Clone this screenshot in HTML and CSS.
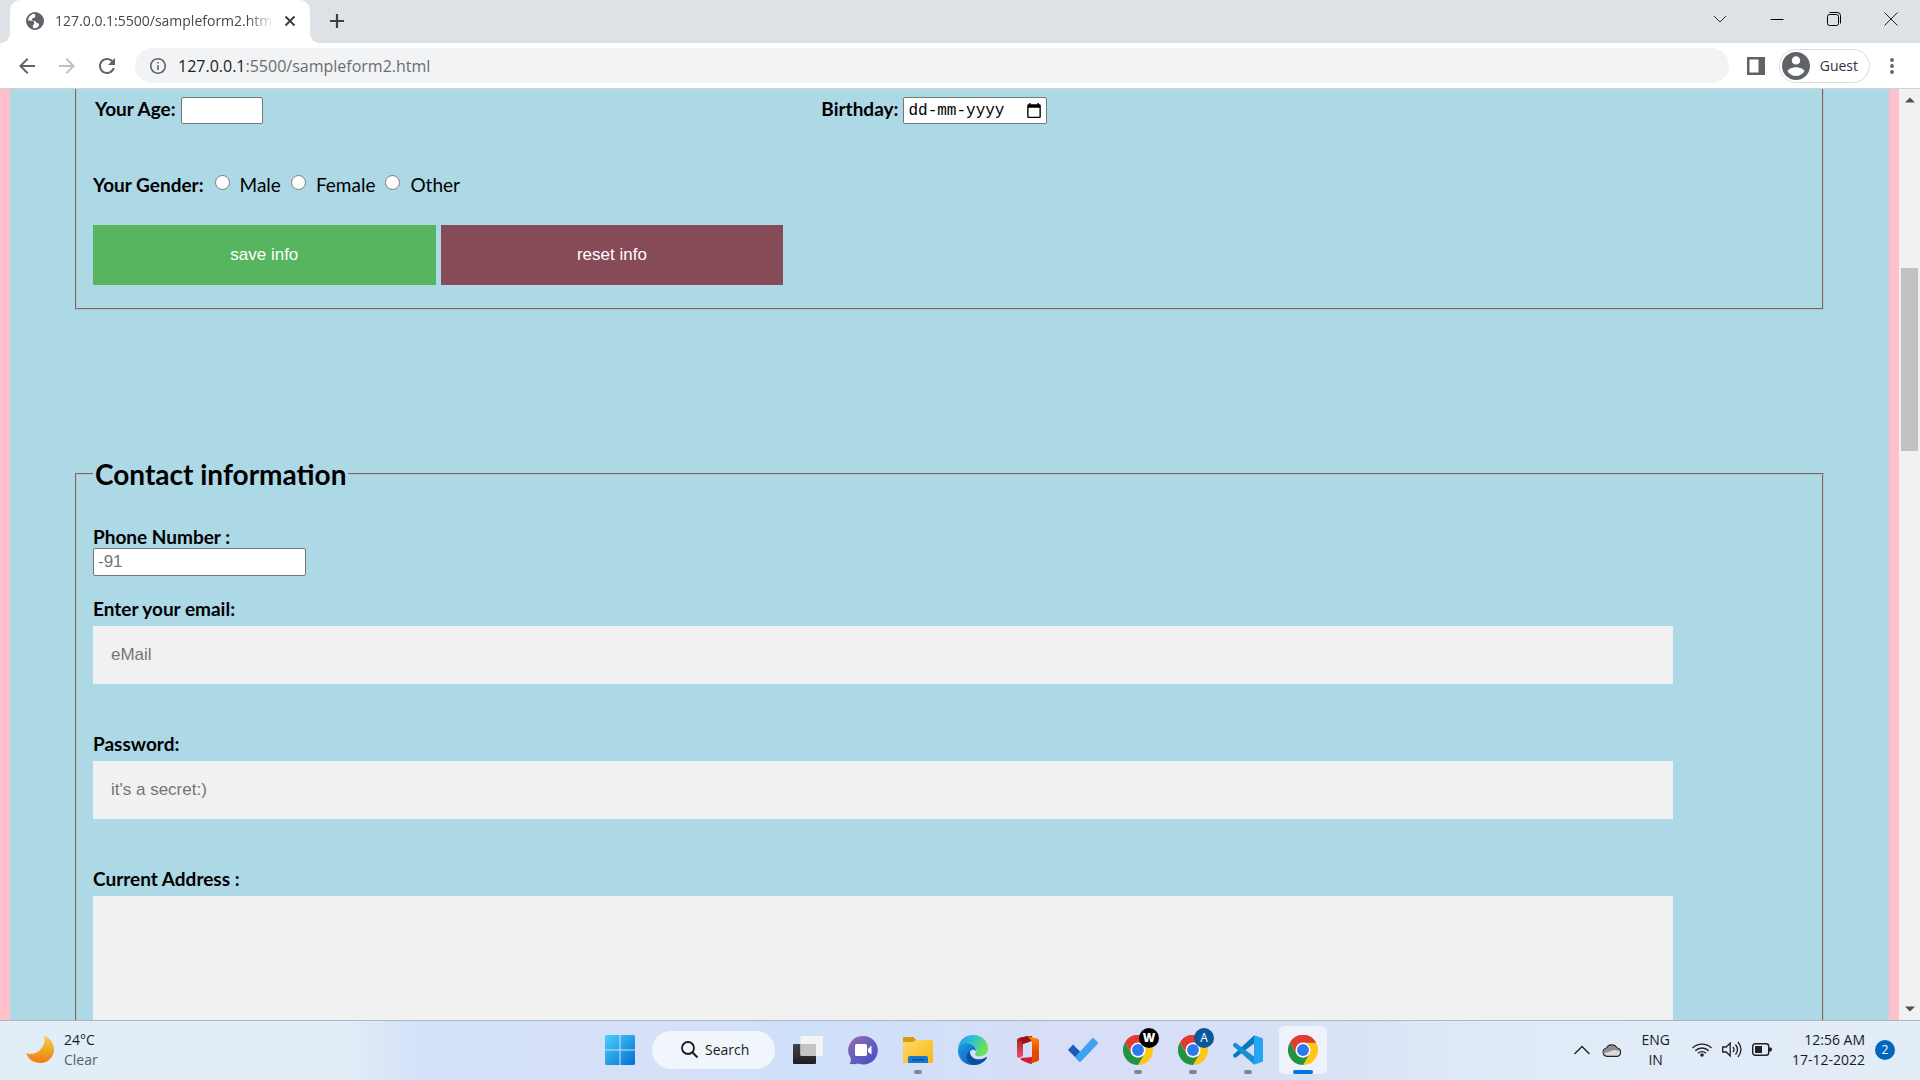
FILE: index.html
```html
<!DOCTYPE html>
<html lang="en">
<head>
<meta charset="utf-8">
<title>127.0.0.1:5500/sampleform2.html</title>
<link rel="stylesheet" href="styles.css">
</head>
<body>
<svg class="defs" aria-hidden="true">
  <defs>
    <symbol id="chrome" viewBox="0 0 48 48">
      <path fill="#e33b2e" d="M24 24 3.2 12A24 24 0 0 1 44.8 12z"/>
      <path fill="#ffc61a" d="M24 12h20.8A24 24 0 0 1 24 48l-2-3 12.400-15z"/>
      <path fill="#229342" d="M3.200 12 13.600 30a12 12 0 0 0 20.800 0L24 48A24 24 0 0 1 3.200 12z"/>
      <path fill="#e33b2e" d="M3.200 12 13.600 30 24 12h20.800A24 24 0 0 0 3.200 12z"/>
      <circle cx="24" cy="24" r="12" fill="#fff"/>
      <circle cx="24" cy="24" r="9.500" fill="#2f78ee"/>
    </symbol>
  </defs>
</svg>
<div class="screen">
  <header class="browser">
    <div class="tabstrip">
      <div class="tab">
        <svg class="favicon" viewBox="2 2 20 20"><circle cx="12" cy="12" r="9" fill="none" stroke="#5f6368" stroke-width="2"/><path fill="#5f6368" d="M12 3c-1 2 1.500 2.500 0 4.500S8 8.500 8.500 10.500s4 .5 4.500 2.500 3 .5 3.500 2.500-2 3.500-3 5.500A9 9 0 0 0 21 12 9 9 0 0 0 12 3zM3 12c2-1 5-.5 6.500 0s2 1.500 1.500 3-1.500 1.500-1.500 3 .5 2 .5 2.800A9 9 0 0 1 3 12z"/></svg>
        <span class="tab-title">127.0.0.1:5500/sampleform2.html</span>
        <button class="icon-btn close" aria-label="Close tab"><svg viewBox="0 0 12 12"><path d="M1.500 1.500l9 9M10.500 1.500l-9 9" stroke="#3c4043" stroke-width="2" fill="none"/></svg></button>
      </div>
      <button class="icon-btn new-tab" aria-label="New tab"><svg viewBox="0 0 16 16"><path d="M8 1v14M1 8h14" stroke="#3c4043" stroke-width="2.200" fill="none"/></svg></button>
      <div class="window-controls">
        <button class="icon-btn" aria-label="Search tabs"><svg viewBox="0 0 14 14"><path d="M1 4l6 6 6-6" stroke="#333" fill="none"/></svg></button>
        <button class="icon-btn" aria-label="Minimize"><svg viewBox="0 0 14 14"><path d="M.5 7.500h13" stroke="#000" fill="none"/></svg></button>
        <button class="icon-btn" aria-label="Restore"><svg viewBox="0 0 14 14"><path d="M2.500.500h8a3 3 0 0 1 3 3v8" stroke="#000" fill="none"/><rect x=".5" y="2.500" width="11" height="11" rx="2" stroke="#000" fill="none"/></svg></button>
        <button class="icon-btn" aria-label="Close"><svg viewBox="0 0 14 14"><path d="M.5.500l13 13M13.500.500l-13 13" stroke="#222" fill="none"/></svg></button>
      </div>
    </div>
    <div class="toolbar">
      <div class="nav">
        <button class="icon-btn" aria-label="Back"><svg viewBox="4 4 16 16"><path fill="#5f6368" d="M20 11H7.830l5.590-5.590L12 4l-8 8 8 8 1.410-1.410L7.830 13H20v-2z"/></svg></button>
        <button class="icon-btn" aria-label="Forward"><svg viewBox="4 4 16 16"><path fill="#bdc1c6" d="M4 11h12.170l-5.590-5.590L12 4l8 8-8 8-1.410-1.410L16.170 13H4v-2z"/></svg></button>
        <button class="icon-btn" aria-label="Reload"><svg viewBox="4 4 16 16"><path fill="#5f6368" d="M17.650 6.350C16.200 4.900 14.210 4 12 4c-4.420 0-7.990 3.580-7.990 8s3.570 8 7.990 8c3.730 0 6.840-2.550 7.730-6h-2.080c-.820 2.330-3.040 4-5.650 4-3.310 0-6-2.690-6-6s2.690-6 6-6c1.660 0 3.140.690 4.220 1.780L13 11h7V4l-2.350 2.350z"/></svg></button>
      </div>
      <div class="omnibox">
        <svg class="info" viewBox="2 2 20 20"><path fill="#5f6368" d="M11 7h2v2h-2zm0 4h2v6h-2zm1-9C6.480 2 2 6.480 2 12s4.480 10 10 10 10-4.480 10-10S17.520 2 12 2zm0 18c-4.410 0-8-3.590-8-8s3.590-8 8-8 8 3.590 8 8-3.590 8-8 8z"/></svg>
        <span class="url"><span class="host">127.0.0.1</span>:5500/sampleform2.html</span>
      </div>
      <button class="icon-btn side-panel" aria-label="Side panel"><svg viewBox="0 0 18 18"><path fill="#5f6368" fill-rule="evenodd" d="M0 0h18v18H0zM2.500 2.500v13h9v-13z"/></svg></button>
      <button class="profile"><svg viewBox="2 2 20 20"><path fill="#5f6368" d="M12 2C6.480 2 2 6.480 2 12s4.480 10 10 10 10-4.480 10-10S17.520 2 12 2zm0 3c1.660 0 3 1.340 3 3s-1.340 3-3 3-3-1.340-3-3 1.340-3 3-3zm0 14.200c-2.500 0-4.710-1.280-6-3.220.030-1.990 4-3.080 6-3.080 1.990 0 5.970 1.090 6 3.080-1.290 1.940-3.500 3.220-6 3.220z"/></svg>Guest</button>
      <button class="icon-btn menu" aria-label="Menu"><svg viewBox="0 0 16 16"><g fill="#5f6368"><circle cx="8" cy="2" r="1.900"/><circle cx="8" cy="8" r="1.900"/><circle cx="8" cy="14" r="1.900"/></g></svg></button>
    </div>
  </header>

  <div class="viewport">
    <main class="page">
      <form>
        <fieldset class="group basic">
          <div class="row two">
            <div class="inline"><label for="age">Your Age:</label><input class="plain age" id="age" type="text"></div>
            <div class="inline"><label for="dob">Birthday:</label><span class="date"><input class="plain" id="dob" type="text" placeholder="dd-mm-yyyy"><svg viewBox="2 1 20 22"><path d="M20 3h-1V1h-2v2H7V1H5v2H4c-1.100 0-2 .9-2 2v16c0 1.100.9 2 2 2h16c1.100 0 2-.9 2-2V5c0-1.100-.9-2-2-2zm0 18H4V8h16v13z"/></svg></span></div>
          </div>
          <div class="gender">
            <b>Your Gender:</b>
            <label><input type="radio" name="gender">Male</label>
            <label><input type="radio" name="gender">Female</label>
            <label><input type="radio" name="gender">Other</label>
          </div>
          <div class="actions">
            <button class="save" type="submit">save info</button>
            <button class="reset" type="reset">reset info</button>
          </div>
        </fieldset>

        <fieldset class="group contact">
          <legend>Contact information</legend>
          <div class="field phone"><label for="phone">Phone Number :</label><input class="plain" id="phone" type="tel" placeholder="-91"></div>
          <div class="field"><label for="email">Enter your email:</label><input class="wide" id="email" type="email" placeholder="eMail"></div>
          <div class="field"><label for="pw">Password:</label><input class="wide" id="pw" type="password" placeholder="it's a secret:)"></div>
          <div class="field"><label for="addr">Current Address :</label><textarea class="wide" id="addr"></textarea></div>
        </fieldset>
      </form>
    </main>
    <div class="scrollbar">
      <svg viewBox="0 0 10 6"><path fill="#505050" d="M0 5.500h10L5 .5z"/></svg>
      <div class="track"><div class="thumb"></div></div>
      <svg viewBox="0 0 10 6"><path fill="#505050" d="M0 .5h10L5 5.500z"/></svg>
    </div>
  </div>

  <footer class="taskbar">
    <div class="weather">
      <svg viewBox="0 0 28 28"><defs><linearGradient id="moon" x2="0" y2="1"><stop stop-color="#ffc46b"/><stop offset=".4" stop-color="#edb52c"/><stop offset="1" stop-color="#f47812"/></linearGradient></defs><path fill="url(#moon)" d="M18 .5c6 2 10 8 10 14 0 7.500-6 13.500-13.500 13.500C8 28 2 24.500.2 18 4 20 10 19 14 15s5.500-9.500 4-14.500z"/></svg>
      <div><div>24°C</div><div class="dim">Clear</div></div>
    </div>
    <nav class="apps">
      <button class="app" aria-label="Start"><svg viewBox="0 0 29 29"><defs><linearGradient id="win" x2="1" y2="1"><stop stop-color="#4cd0fc"/><stop offset="1" stop-color="#0070d2"/></linearGradient></defs><path fill="url(#win)" d="M1 0h13v14H0V1zM15 0h13l1 1v13H15zM0 15h14v14H1l-1-1zM15 15h14v13l-1 1H15z"/></svg></button>
      <button class="search"><svg viewBox="0 0 17 17"><circle cx="7" cy="7" r="6" fill="none" stroke="#1b1b1b" stroke-width="1.800"/><path d="M11.500 11.500l5 5" stroke="#1b1b1b" stroke-width="2"/></svg>Search</button>
      <button class="app" aria-label="Task view"><svg viewBox="0 0 30 30"><defs><linearGradient id="tvd" y2="1" x2="0"><stop stop-color="#444"/><stop offset="1" stop-color="#1e1e1e"/></linearGradient></defs><rect y="9" width="23" height="20" rx="1" fill="url(#tvd)"/><rect x="7.500" y="1" width="22.500" height="20" rx="1" fill="#f4f4f4"/><path fill="#c4c4c4" d="M7.500 9H23v12H8.500l-1-1z"/></svg></button>
      <button class="app" aria-label="Chat"><svg viewBox="0 0 30 30"><defs><linearGradient id="chat" x2=".8" y2="1"><stop stop-color="#a367b5"/><stop offset=".45" stop-color="#6b63b7"/><stop offset="1" stop-color="#4f4cc9"/></linearGradient></defs><path fill="url(#chat)" d="M15 1a14.300 14.300 0 1 1-5 27.500C7 29.500 4 29 1.500 29c1.500-2 1.500-4 1-6A14.300 14.300 0 0 1 15 1z"/><rect x="7" y="9" width="12" height="12" rx="1.500" fill="#fff"/><path fill="#fff" d="M20 14l3.500-3.500v9L20 17z"/></svg></button>
      <button class="app running" aria-label="File Explorer"><svg viewBox="0 0 30 30"><defs><linearGradient id="fold" x2="1" y2="1"><stop stop-color="#ffd868"/><stop offset="1" stop-color="#f9b716"/></linearGradient></defs><path fill="#d99a08" d="M0 3q0-1 1-1h9.500l2.500 3v4H0z"/><path fill="url(#fold)" d="M0 7h10l3-2h16q1 0 1 1v21q0 1-1 1H1q-1 0-1-1z"/><path fill="#1679ce" d="M5 28v-5q0-2 2-2h16q2 0 2 2v5z"/><path fill="#0a4e93" d="M9 24h12v1.500H9z"/></svg></button>
      <button class="app" aria-label="Edge"><svg viewBox="0 0 48 48"><defs><linearGradient id="e1" x2="1" y2=".4"><stop stop-color="#219be8"/><stop offset=".5" stop-color="#2ec1d2"/><stop offset="1" stop-color="#71e154"/></linearGradient><linearGradient id="e2" x2="1" y2="1"><stop stop-color="#1d9bea"/><stop offset="1" stop-color="#0d57ad"/></linearGradient></defs><path fill="url(#e1)" d="M0 22C1 9 11 0 24 0c14 0 24 10 24 21 0 8-6 13-14 13-5 0-8-2-6-5 4-5 0-12-9-12C9 13 2 17 0 22z"/><path fill="url(#e2)" d="M0 23c2-8 9-11 16-9 8 1 13 6 13 12-3-4-8-3-10 1-4 9 5 18 16 16l-7 5C12 50-1 39 0 23z"/><path fill="#0d4f9b" d="M19 25c-9 6-6 21 7 23 9 0 16-5 20-11 1-2-1-2-2-1-9 6-26 3-25-11z"/></svg></button>
      <button class="app" aria-label="Office"><svg viewBox="0 0 30 30"><defs><linearGradient id="of" x2="0" y2="1"><stop stop-color="#ff8a05"/><stop offset=".6" stop-color="#e64500"/></linearGradient><linearGradient id="ol" x2="0" y2="1"><stop stop-color="#981c20"/><stop offset="1" stop-color="#ef5070"/></linearGradient></defs><path fill="url(#ol)" d="M4 5q0-1.500 2-2l9-2v6l-5 2v12l-4 2q-2 0-2-2z"/><path fill="#a31116" d="M6 3l9-2h4v5l-9 3z"/><path fill="#d51b38" d="M8 23l11-1v7l-3-.5-7-3q-2-1-1-2.500z"/><path fill="url(#of)" d="M15 1l9 2.500q2 .5 2 2v19q0 1.500-2 2L16 29l3-3V7z"/></svg></button>
      <button class="app" aria-label="To Do"><svg viewBox="0 0 30 30"><path fill="#1b5bbe" d="M0 15l5-5.500 10 10-4.500 6z"/><path fill="#3fa2ee" d="M7 22L24 3.500q1-1 2 0l3.500 3.500q1 1 0 2L13 26.500q-1 1-2 0z"/></svg></button>
      <button class="app running" aria-label="Chrome, profile W"><svg viewBox="0 0 48 48"><use href="#chrome"/></svg><span class="badge black">W</span></button>
      <button class="app running" aria-label="Chrome, profile A"><svg viewBox="0 0 48 48"><use href="#chrome"/></svg><span class="badge">A</span></button>
      <button class="app running" aria-label="Visual Studio Code"><svg viewBox="0 0 30 30"><path fill="#0877bd" d="M0 20L21 .5v8L3 22.500q-1 .5-1.500 0L0 21z"/><path fill="#168fd8" d="M0 9.500L1.500 8q.8-.6 1.500 0l18 13.500v8L0 11z"/><path fill="#24a5f2" d="M21 .3L29 3q1 .5 1 1.500v21q0 1-1 1.500l-8 2.700z"/></svg></button>
      <button class="app active" aria-label="Chrome"><svg viewBox="0 0 48 48"><use href="#chrome"/></svg></button>
    </nav>
    <div class="tray">
      <svg class="up" viewBox="0 0 16 16"><path d="M.5 12L8 4.500 15.500 12" fill="none" stroke="#222" stroke-width="1.400"/></svg>
      <svg class="cloud" viewBox="0 0 20 14"><path fill="#d9d9d9" stroke="#222" stroke-width="1.200" d="M5 13.300a4.200 4.200 0 0 1-.5-8.300A6 6 0 0 1 15 5a4.200 4.200 0 0 1 0 8.300z"/><path fill="#8d8d8d" d="M1.500 10.500A4 4 0 0 1 5 5.500a5.500 5.500 0 0 1 9.500 0q2.500.5 3.800 2.500L12 7z"/></svg>
      <div class="lang"><div>ENG</div><div>IN</div></div>
      <svg class="wifi" viewBox="0 0 20 15"><g fill="none" stroke="#222" stroke-width="1.400"><path d="M.5 6a13.500 13.500 0 0 1 19 0M3.300 8.700a9.500 9.500 0 0 1 13.400 0M6 11.300a5.700 5.700 0 0 1 8 0"/></g><circle cx="10" cy="13" r="1.800" fill="#222"/></svg>
      <svg class="vol" viewBox="0 0 20 17"><path d="M.7 6v5h3.500l4 4V2l-4 4zM11 6q2 2.500 0 5M13.500 3.500q4 5 0 10M16 1q6 7.500 0 15" fill="none" stroke="#222" stroke-width="1.300"/></svg>
      <svg class="bat" viewBox="0 0 20 13"><rect x=".7" y=".7" width="16" height="11.600" rx="2.500" fill="none" stroke="#222" stroke-width="1.400"/><rect x="3" y="3" width="7" height="7" fill="#222"/><path fill="#222" d="M17 4.500h1.500q1.500 0 1.500 2t-1.500 2H17z"/></svg>
      <div class="clock"><div>12:56 AM</div><div>17-12-2022</div></div>
      <span class="count">2</span>
    </div>
  </footer>
</div>
</body>
</html>
```
FILE: styles.css
```css
* { box-sizing: border-box; }
body { margin: 0; font-family: "Open Sans", "Noto Sans", sans-serif; }
svg { display: block; flex: none; }
button { font-family: inherit; border: 0; padding: 0; background: none; color: inherit; }
.defs { position: absolute; width: 0; height: 0; }
.screen { display: flex; flex-direction: column; height: 100vh; overflow: hidden; }
.icon-btn { display: flex; align-items: center; justify-content: center; width: 40px; height: 32px; }
.icon-btn svg { width: 16px; height: 16px; }

/* browser chrome */
.tabstrip { display: flex; height: 43px; padding-left: 10px; background: #dee1e6; }
.tab { position: relative; display: flex; align-items: center; width: 300px; padding: 0 8px 2px 16px; background: #fff; border-radius: 10px 10px 0 0; }
.tab::before, .tab::after { content: ""; position: absolute; bottom: 0; width: 10px; height: 10px; }
.tab::before { left: -10px; background: radial-gradient(circle at 0 0, #dee1e6 10px, #fff 10px); }
.tab::after { right: -10px; background: radial-gradient(circle at 100% 0, #dee1e6 10px, #fff 10px); }
.favicon { width: 18px; height: 18px; }
.tab-title { flex: 1; margin-left: 11px; overflow: hidden; white-space: nowrap; font-size: 14px; color: #45484c; mask-image: linear-gradient(90deg, #000 88%, transparent); }
.close { width: 24px; margin-left: 4px; }
.close svg { width: 12px; height: 12px; }
.new-tab { height: 42px; margin-left: 7px; }
.window-controls { display: flex; margin-left: auto; padding-right: 1px; }
.window-controls .icon-btn { width: 57px; height: 37px; }
.window-controls svg { width: 14px; height: 14px; }
.toolbar { display: flex; align-items: center; height: 46px; padding: 0 8px 0 7px; background: #fff; border-bottom: 1px solid #d0d3d6; }
.nav { display: flex; margin-right: 8px; }
.omnibox { flex: 1; display: flex; align-items: center; height: 35px; padding: 0 15px; border-radius: 18px; background: #f1f3f4; }
.info { width: 16px; height: 16px; margin-right: 12px; }
.url { font-size: 16px; color: #6a6e73; }
.host { color: #202124; }
.side-panel { margin: 0 3px 0 7px; }
.side-panel svg { width: 18px; height: 18px; }
.profile { display: flex; align-items: center; gap: 10px; height: 34px; padding: 0 11px 0 2px; border: 1px solid #dadce0; border-radius: 17px; font-size: 14px; color: #303236; }
.profile svg { width: 28px; height: 28px; }
.menu { width: 44px; margin-right: -2px; }

/* web page */
.viewport { flex: 1; min-height: 0; display: flex; overflow: hidden; }
.page { flex: 1; height: 1200px; padding: 0 65px; background: lightblue; border: solid pink; border-width: 0 10px; font-family: Lato, sans-serif; font-size: 19px; line-height: 23px; color: #000; }
.group { margin: 0; padding: 0 16px; border: 2px groove #c0c0c0; }
.basic { padding-top: 8px; padding-bottom: 23px; border-top: 0; }
.group label { font-weight: 700; }
.row.two { display: grid; grid-template-columns: 17fr 23fr; height: 27px; padding: 0 2px; }
.inline { display: flex; gap: 5px; }
.plain { height: 27px; padding: 0 4px; border: 1px solid #767676; border-radius: 2px; background: #fff; font: 17px "Liberation Sans", sans-serif; color: #000; }
.plain::placeholder, .wide::placeholder { color: #757575; opacity: 1; }
.age { width: 82px; }
.date { position: relative; }
.date .plain { display: block; width: 144px; font: 16px "Liberation Mono", monospace; }
.date .plain::placeholder { color: #000; }
.date svg { position: absolute; right: 6px; top: 6px; width: 14px; height: 15px; }
.gender { display: flex; align-items: center; height: 24px; margin-top: 48px; }
.gender b { margin-right: 5px; }
.gender label { display: flex; align-items: center; margin-right: 4px; font-weight: 400; }
.gender input { width: 15px; height: 15px; margin: 0 10px 4px 6px; }
.actions { display: flex; gap: 5px; margin-top: 29px; }
.actions button { width: 20%; height: 60px; font: 17px "Liberation Sans", sans-serif; color: #fff; }
.save { background: #57b560; }
.reset { background: #874a57; }
.contact { margin-top: 146px; padding-top: 33px; }
legend { padding: 0 2px; font-size: 28px; line-height: 36px; font-weight: 700; }
.field { display: flex; flex-direction: column; align-items: flex-start; gap: 6px; margin-bottom: 48px; }
.phone { gap: 0; margin-bottom: 21px; }
.phone .plain { width: 213px; height: 28px; }
.wide { width: calc(100% - 133px); height: 58px; padding: 0 18px; border: 0; background: #f1f1f1; font: 17px "Liberation Sans", sans-serif; }
textarea.wide { height: 136px; resize: vertical; }
.scrollbar { display: flex; flex-direction: column; align-items: center; width: 21px; padding: 8px 0; background: #f1f1f1; }
.scrollbar svg { width: 10px; height: 6px; }
.track { flex: 1; padding-top: 165px; }
.thumb { width: 17px; height: 183px; background: #c1c1c1; }

/* taskbar */
.taskbar { display: grid; grid-template-columns: 1fr auto 1fr; align-items: center; height: 60px; padding-bottom: 2px; border-top: 1px solid #b0b7c3; background: linear-gradient(90deg, #e1edf7 0, #e3edf8 18%, #d3e0f8 22%, #d6e0f7 35%, #cfe0fa 42%, #d7def6 55%, #d8e0f6 68%, #e0ebf8 78%, #e2edf8 100%); font-size: 14px; line-height: 20px; color: #1b1b1b; }
.weather { display: flex; gap: 10px; padding-left: 26px; }
.weather svg { width: 28px; height: 28px; margin-top: 5px; }
.dim { color: #5a6069; }
.apps { display: flex; align-items: center; padding-left: 2px; }
.app { position: relative; display: grid; place-items: center; width: 55px; height: 57px; }
.app > svg { position: relative; width: 30px; height: 30px; }
.running::after, .active::after { content: ""; position: absolute; bottom: 4px; left: 50%; width: 8px; margin-left: -4px; height: 4px; border-radius: 2px; background: #80868f; }
.active::after { width: 20px; margin-left: -10px; background: #0078d7; }
.active::before { content: ""; position: absolute; inset: 5px 3px 4px 4px; border-radius: 5px; background: #edf2fb; }
.badge { position: absolute; top: 7px; right: 6px; width: 20px; height: 20px; border-radius: 50%; background: #0a579b; color: #fff; font-size: 12px; line-height: 20px; text-align: center; }
.badge.black { background: #000; font-weight: 800; }
.search { display: flex; align-items: center; gap: 7px; width: 123px; height: 38px; margin: 0 5px; padding-left: 29px; border-radius: 19px; background: #f1f6fd; font-size: 14px; }
.search svg { width: 17px; height: 17px; }
.tray { display: flex; align-items: center; justify-content: flex-end; padding-right: 25px; }
.up { width: 16px; height: 16px; margin-right: 12px; }
.cloud { width: 20px; height: 14px; margin-right: 19px; }
.lang { text-align: center; margin-right: 22px; }
.wifi { width: 20px; height: 15px; margin-right: 10px; }
.vol { width: 20px; height: 17px; margin-right: 10px; }
.bat { width: 20px; height: 13px; margin-right: 20px; }
.clock { text-align: right; }
.count { width: 20px; height: 20px; margin-left: 10px; border-radius: 50%; background: #0067c0; color: #fff; font-size: 12px; text-align: center; }
```
